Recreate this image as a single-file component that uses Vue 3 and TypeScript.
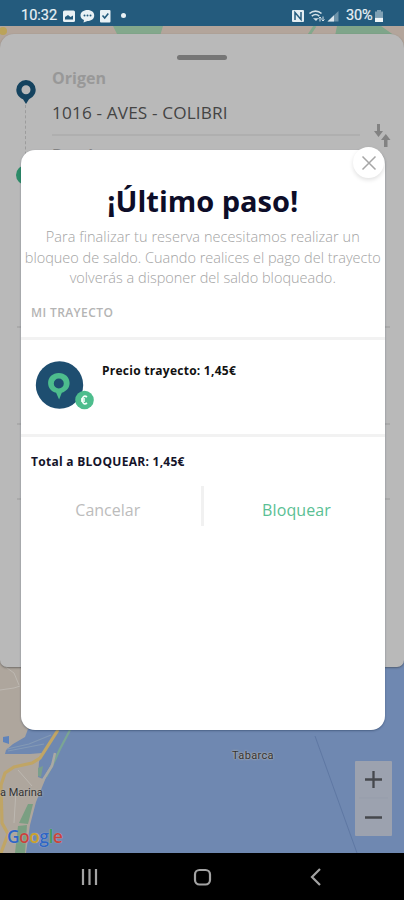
<script setup lang="ts">
import { ref } from 'vue'

const origin = ref('1016 - AVES - COLIBRI')
const price = ref('1,45€')
const lines = [
  { text: 'Para finalizar tu reserva necesitamos realizar un', cls: 'l1' },
  { text: 'bloqueo de saldo. Cuando realices el pago del trayecto', cls: 'l2' },
  { text: 'volverás a disponer del saldo bloqueado.', cls: 'l3' },
]
const google = [
  { c: 'G', color: '#2f66c4' },
  { c: 'o', color: '#c8443c' },
  { c: 'o', color: '#c9a02c' },
  { c: 'g', color: '#2f66c4' },
  { c: 'l', color: '#3d9a58' },
  { c: 'e', color: '#c8443c' },
]
</script>

<template>
  <div class="phone">
    <header class="status">
      <span class="clock">10:32</span>
      <svg class="left-icons" width="66" height="14" viewBox="0 0 66 14">
        <rect x="1" y="1.5" width="12" height="11.5" rx="1.5" fill="#e9f1f5" />
        <path d="M3 10.5V8l3-2 2.5 2L11 6.5v4z" fill="#245b7d" />
        <path d="M25.500 1c4 0 6.700 2.300 6.700 5.500S29.500 12 25.500 12L21.500 13.500 22 11C19.800 10 18.500 8.500 18.500 6.500 18.500 3.300 21.500 1 25.500 1z" fill="#e9f1f5" />
        <g fill="#245b7d"><circle cx="22.500" cy="6.500" r="1" /><circle cx="25.500" cy="6.500" r="1" /><circle cx="28.500" cy="6.500" r="1" /></g>
        <rect x="38" y="1" width="10.500" height="12.500" rx="1" fill="#e9f1f5" />
        <path d="M40.500 6.500l2.200 2.500 3.600-4.500" fill="none" stroke="#245b7d" stroke-width="1.600" />
        <circle cx="61.500" cy="6.500" r="2.500" fill="#e9f1f5" />
      </svg>
      <svg class="right-icons" width="50" height="14" viewBox="0 0 50 14">
        <rect x="1" y="1" width="12" height="12" rx="1" fill="#e4edf2" />
        <path d="M4 11V3.500l6 7V3" fill="none" stroke="#245b7d" stroke-width="1.500" />
        <g fill="none" stroke="#d5e2e9" stroke-width="1.600"><path d="M18.500 4.500c3.500-3.200 8.500-3.200 12 0" /><path d="M20.800 7.200c2.300-2 5.300-2 7.500 0" /></g>
        <path d="M22 9.200h5.500L25 12z" fill="#d5e2e9" />
        <path d="M29 12.500V8m-1.500 1.500L29 8l1.500 1.500M32 7.500V12m-1.500-1.500L32 12l1.500-1.500" stroke="#d5e2e9" fill="none" />
        <path d="M36.500 12.500L47.500 2v10.500z" fill="#6d92a8" />
        <path d="M36.500 12.500l6.500-6.200v6.200z" fill="#dce7ed" />
      </svg>
      <span class="pct">30%</span>
      <svg width="10" height="14" viewBox="0 0 10 14"><path d="M3 1h4v1.500h2V8H1V2.500h2z" fill="#7fa0b4" /><path d="M1 8.500h8V13H1z" fill="#eff5f8" /></svg>
    </header>

    <main class="stage">
      <svg class="map" width="404" height="827" viewBox="0 26 404 827">
        <rect y="26" width="404" height="827" fill="#6f88b1" />
        <rect y="26" width="404" height="40" fill="#b3a59b" />
        <path d="M113 26h50l-3 10h-42z" fill="#83a88c" />
        <path d="M337 26h44l14 10h-60z" fill="#7fa58a" />
        <path d="M315 26l-6 9" stroke="#83a88c" stroke-width="3" />
        <circle cx="3" cy="31" r="4" fill="#bba359" />
        <path d="M0 650H72L63 740 53 762 47 775 36 802 30 825 26 853H0z" fill="#aea69d" />
        <path d="M28 729L72 728 58 752 43 779 38 777 39 762 42 753 30 754 5 754 6 750 13 744 25 737z" fill="#6f88b1" />
        <path d="M3 737l6-1v8l-6-2z" fill="#5f83bb" />
        <path d="M7 749l22-5 22-9M8 751l36-7" fill="none" stroke="#8399b5" stroke-width="1.200" />
        <path d="M70 730L60 749 54 762 46 777" fill="none" stroke="#7ba594" stroke-width="2.200" />
        <path d="M38 768l5-2-2 11-3-1z" fill="#7a9f8c" />
        <path d="M55 753l-3 13-9 14" fill="none" stroke="#aaa9a4" stroke-width="2.500" />
        <path d="M58 730L40 758 32 763 14 767 5 773 1 785 2 823 8 834 1 853" fill="none" stroke="#c0a565" stroke-width="3.200" />
        <path d="M28 804h5l-5 20-9-1zM18 826l9-1-2 28H15z" fill="#7a9f82" />
        <path d="M0 690l14-2 6-2M3 665l11 8 5 12M18 770l14 16M16 790l-2 33" fill="none" stroke="#bdb8b1" />
        <path d="M315 736L357 853" stroke="#5b749f" stroke-width=".8" />
      </svg>

      <section class="sheet">
        <div class="grabber"></div>
        <div class="route">
          <div class="rail">
            <svg width="20" height="25" viewBox="0 0 20 25"><path fill-rule="evenodd" d="M10 0a9.700 9.700 0 0 1 9.700 9.800c0 5-3.700 8-6.700 9.500L10 24l-3-4.700C4 18 .3 15 .3 9.800A9.700 9.700 0 0 1 10 0zm0 5.300a4.500 4.500 0 1 0 0 9 4.500 4.500 0 0 0 0-9z" fill="#15435f" /></svg>
            <div class="dots"></div>
            <div class="dest-dot"></div>
          </div>
          <div class="fields">
            <div class="label">Origen</div>
            <div class="value">{{ origin }}</div>
            <div class="label second">Destino</div>
          </div>
          <svg class="swap" width="18" height="24" viewBox="0 0 18 24" fill="#828282"><path d="M3 0h3v7h3l-4.500 6L0 7h3zM10 23h3.500v-7h3L11.800 10 7 16h3z" /></svg>
        </div>
        <div class="row r1"></div>
        <div class="row r2"></div>
        <div class="row r3"></div>
      </section>

      <span class="place tabarca">Tabarca</span>
      <span class="place marina">a Marina</span>
      <span class="google"><span v-for="(g, i) in google" :key="i" :style="{ color: g.color }">{{ g.c }}</span></span>
      <div class="zoomer">
        <svg width="37" height="74" viewBox="0 0 37 74"><path d="M10 18.500h17M18.500 10v17M10 56.500h17" stroke="#45484d" stroke-width="2.300" /><path d="M4 37h29" stroke="#969dab" /></svg>
      </div>

      <section class="modal">
        <button class="close" aria-label="Cerrar">
          <svg width="16" height="16" viewBox="0 0 16 16"><path d="M1.500 1.500l13 13m0-13l-13 13" stroke="#a6a6a6" stroke-width="1.500" /></svg>
        </button>
        <h1>¡Último paso!</h1>
        <p><span v-for="l in lines" :key="l.cls" :class="l.cls">{{ l.text }}</span></p>
        <h2>MI TRAYECTO</h2>
        <div class="trip">
          <svg width="60" height="50" viewBox="0 0 60 50">
            <circle cx="24.500" cy="24" r="23.700" fill="#1e4e70" />
            <path fill-rule="evenodd" d="M23.800 12c6.200 0 10.800 4.300 10.800 10 0 5-3.300 8.300-7.800 9.800L24.100 38.500l-3-6.700C16.300 30.500 13.100 27 13.100 22c0-5.700 4.500-10 10.700-10zm0 5.500a5 5 0 1 0 0 10 5 5 0 0 0 0-10z" fill="#4dbd8d" />
            <circle cx="49.500" cy="39" r="9.300" fill="#4dbd8d" />
            <path d="M52 36c-2.800-2-4.800 0-4.800 3s2 5 4.800 3M46 38h4M46 40h4" fill="none" stroke="#f4fffa" stroke-width="1.700" />
          </svg>
          <span class="price">Precio trayecto: {{ price }}</span>
        </div>
        <div class="total">Total a BLOQUEAR: {{ price }}</div>
        <div class="actions">
          <button class="cancel">Cancelar</button>
          <button class="confirm">Bloquear</button>
        </div>
      </section>
    </main>

    <nav class="nav">
      <svg width="404" height="47" viewBox="0 0 404 47" fill="none" stroke="#a3a3a3" stroke-width="2.200">
        <path d="M83 16v16M89.500 16v16M96 16v16" />
        <rect x="195" y="17" width="15" height="14.500" rx="4.500" />
        <path d="M320 16l-8 8 8 8" />
      </svg>
    </nav>
  </div>
</template>

<style>
body { background: #000; }
</style>

<style scoped>
.phone { width: 404px; height: 900px; display: flex; flex-direction: column; overflow: hidden; font-family: "Open Sans", "Noto Sans", sans-serif; }
.phone * { box-sizing: border-box; }
svg { display: block; flex: none; }
button { border: 0; background: none; padding: 0; font: inherit; }
.status { height: 26px; flex: none; background: #245b7d; color: #e9f1f5; display: flex; align-items: center; padding: 5px 20px 0 21px; font: 14.500px Roboto, sans-serif; }
.clock { width: 41px; white-space: nowrap; -webkit-text-stroke: .2px; }
.right-icons { margin-left: auto; margin-right: 5px; }
.pct { width: 28px; font-size: 14.500px; letter-spacing: -.2px; -webkit-text-stroke: .2px; }
.stage { height: 827px; flex: none; display: grid; grid-template: 827px / 404px; position: relative; }
.map, .sheet, .modal { grid-area: 1 / 1; }
.sheet { margin-top: 8px; height: 633px; background: #b9b9b9; border-radius: 14px 14px 7px 7px; box-shadow: 0 1px 2px rgba(40, 40, 40, .45); padding-top: 21px; }
.grabber { width: 50px; height: 5px; border-radius: 3px; background: #767676; margin: 0 auto; }
.route { display: flex; height: 160px; padding-left: 16px; }
.rail { width: 36px; padding-top: 20px; display: flex; flex-direction: column; }
.dots { height: 60px; margin-left: 9px; border-left: 1px dashed #9c9c9c; }
.dest-dot { width: 20px; height: 20px; border-radius: 50%; background: #2c8b68; }
.fields { width: 308px; }
.label { margin-top: 7px; font-size: 16px; line-height: 22px; font-weight: 700; color: #989898; }
.value { margin-top: 9px; height: 38px; padding-top: 3px; font-size: 17.200px; line-height: 24px; color: #444; letter-spacing: .14px; border-bottom: 2px solid #afafaf; white-space: nowrap; }
.second { margin-top: 8px; color: #858585; }
.swap { margin: 64px 0 0 14px; }
.row { border-bottom: 2px solid #aaa; margin: 0 14px 0 17px; }
.r1 { height: 108px; }
.r2 { height: 97px; }
.r3 { height: 75px; }
.place { position: absolute; font: 11px Roboto, sans-serif; line-height: 14px; color: #333; white-space: nowrap; text-shadow: 0 0 2px #b7b5b0, 0 0 2px #b7b5b0; }
.tabarca { left: 232px; top: 723px; letter-spacing: .35px; }
.marina { left: 0; top: 760px; }
.google { position: absolute; left: 7px; top: 799px; font-size: 17.500px; line-height: 22px; letter-spacing: -.6px; font-weight: 600; text-shadow: 0 0 1px #c5c8cf; }
.zoomer { position: absolute; left: 355px; top: 735px; width: 37px; height: 75px; background: #9ca2af; border-radius: 1px; }
.modal { position: relative; margin: 124px 0 0 20.500px; width: 364.500px; height: 579.500px; border-radius: 14px; background: #fff; box-shadow: 0 1px 2px rgba(20, 40, 70, .4); display: flex; flex-direction: column; }
.close { position: absolute; right: 1px; top: -3px; width: 31px; height: 31px; border-radius: 50%; background: #fff; box-shadow: 0 2px 4px rgba(0, 0, 0, .12); display: grid; place-items: center; }
h1 { margin: 31px 0 0; font-size: 29px; line-height: 40px; font-weight: 700; color: #0d0d28; text-align: center; }
p { margin: 6px 0 0; display: flex; flex-direction: column; align-items: center; font-size: 14.500px; line-height: 20.500px; font-weight: 300; color: #a3a3a3; white-space: nowrap; }
.l1 { letter-spacing: .06px; }
h2 { margin: 15px 0 0 10.500px; font-size: 12px; letter-spacing: .4px; line-height: 18px; font-weight: 600; color: #b4b4b4; }
.trip { margin-top: 15.500px; height: 100px; border-top: 3px solid #f2f2f2; border-bottom: 3px solid #f2f2f2; padding: 21px 0 0 14.500px; display: flex; }
.price { margin-left: 7px; padding-top: 1px; font-size: 12px; letter-spacing: .25px; line-height: 18px; font-weight: 700; color: #111; white-space: nowrap; }
.total { margin: 16px 0 0 10.500px; font-size: 12px; letter-spacing: .28px; line-height: 18px; font-weight: 700; color: #14142a; white-space: nowrap; }
.actions { margin-top: 15px; height: 40px; display: grid; grid-template-columns: 183.500px 181px; font-size: 16px; }
.cancel { color: #bcbcbc; border-right: 3px solid #f1f1f1; padding: 7px 6px 0 0; }
.confirm { color: #5abf94; padding: 7px 0 0 4px; letter-spacing: .1px; }
</style>
